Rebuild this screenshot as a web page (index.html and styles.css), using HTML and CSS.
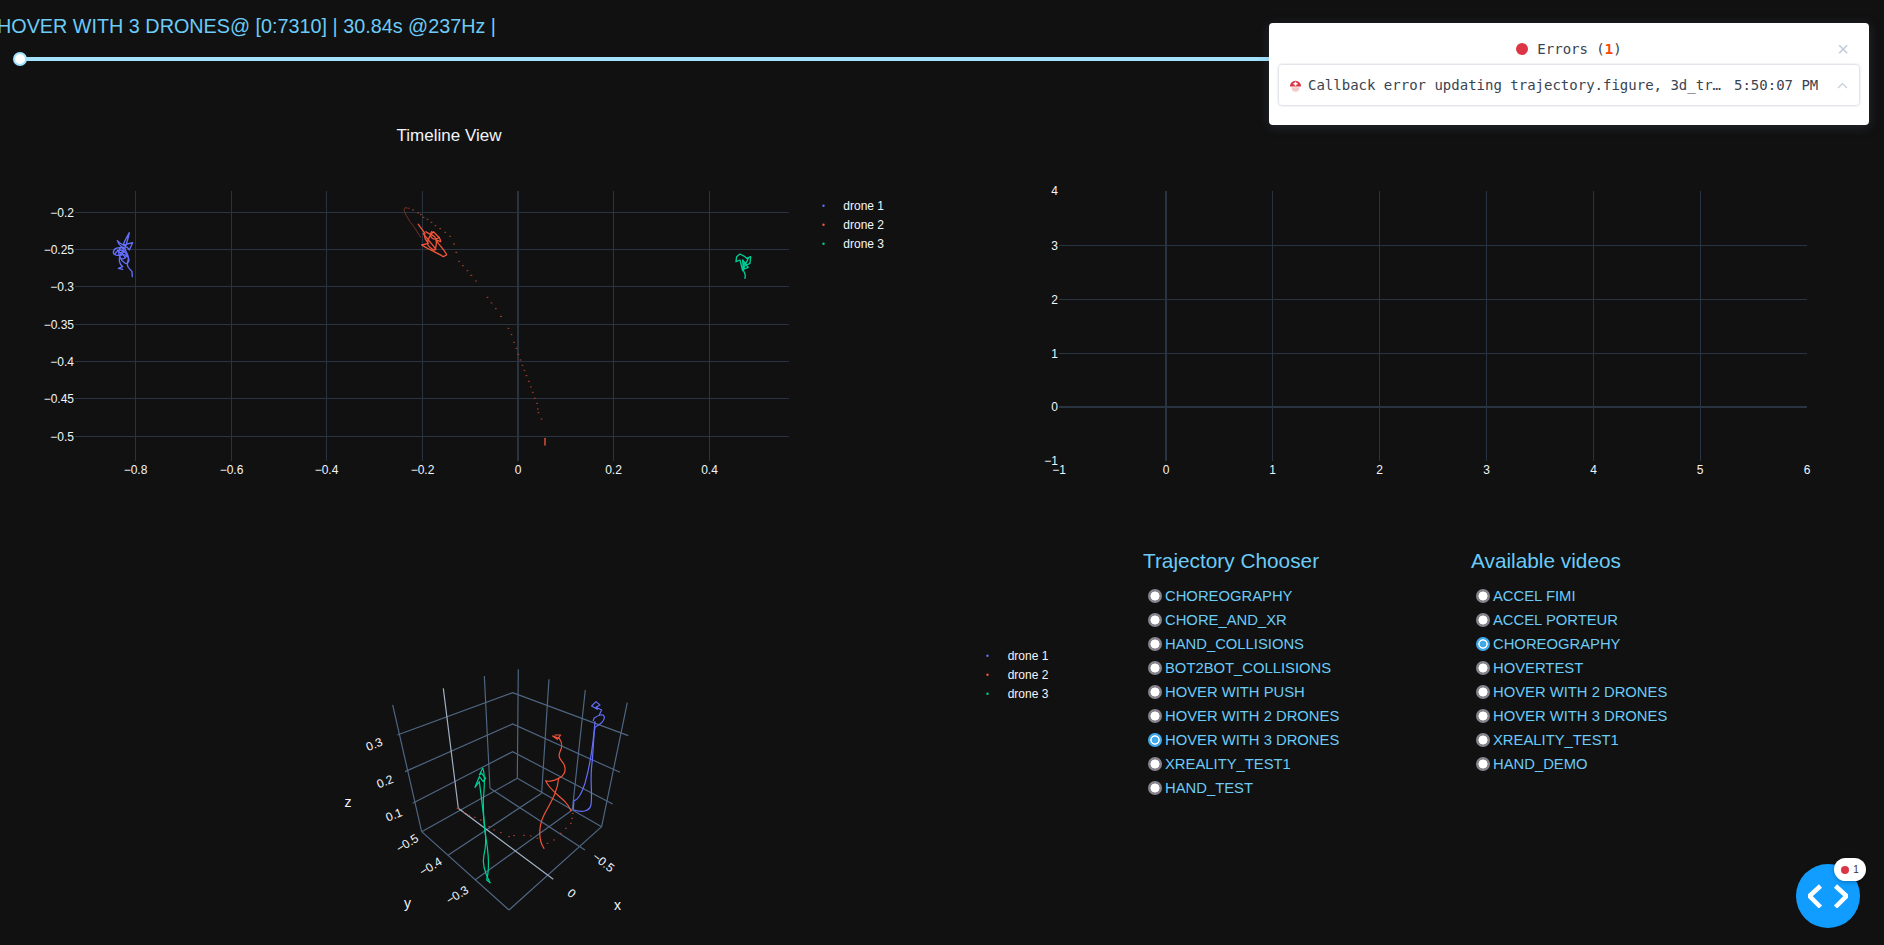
FILE: index.html
```html
<!DOCTYPE html>
<html lang="en">
<head>
  <meta charset="UTF-8">
  <title>Trajectory viewer</title>
  <link rel="stylesheet" href="styles.css">
</head>
<body>
  <h2 class="status">HOVER WITH 3 DRONES@ [0:7310] | 30.84s @237Hz |</h2>
  <div class="slider"><span class="slider-handle"></span></div>

  <div class="row-top">
    <!-- timeline -->
    <svg class="plot" width="942" height="450" viewBox="0 80 942 450">
      <text class="plot-title" x="449" y="141">Timeline View</text>
      <path class="grid" d="M75 212.5H789M75 249.5H789M75 286.5H789M75 324.5H789M75 361.5H789M75 398.5H789M75 436.5H789"/>
      <path class="grid" d="M135.5 191V461M231.5 191V461M326.5 191V461M422.5 191V461M613.5 191V461M709.5 191V461"/>
      <path class="zero" d="M518 191V461"/>
      <g class="tick tick-y">
        <text x="74" y="216.5">−0.2</text>
        <text x="74" y="253.5">−0.25</text>
        <text x="74" y="290.5">−0.3</text>
        <text x="74" y="328.5">−0.35</text>
        <text x="74" y="365.5">−0.4</text>
        <text x="74" y="402.5">−0.45</text>
        <text x="74" y="440.5">−0.5</text>
      </g>
      <g class="tick tick-x">
        <text x="135.5" y="473.5">−0.8</text>
        <text x="231.5" y="473.5">−0.6</text>
        <text x="326.5" y="473.5">−0.4</text>
        <text x="422.5" y="473.5">−0.2</text>
        <text x="518" y="473.5">0</text>
        <text x="613.5" y="473.5">0.2</text>
        <text x="709.5" y="473.5">0.4</text>
      </g>
      <g transform="translate(60 180) scale(.3333)">
        <path class="trace t-blue" d="M217 290L216 275L205 262C198 252 205 245 205 235C207 225 195 215 195 205C200 190 205 175 208 158C200 172 192 185 190 195L218 188L208 210C200 195 180 195 172 182C175 195 185 200 190 205C175 200 160 205 160 218C162 228 178 228 185 222C195 215 200 208 190 202C178 200 172 215 180 232C185 245 205 262 207 240C205 225 190 220 180 228C175 240 180 255 188 260L175 265L188 268"/>
        <path class="trace t-blue" d="M165 222C175 205 190 210 198 220C204 232 190 240 182 235C172 225 185 212 195 232M172 210C180 225 195 215 188 205"/>
      </g>
      <g transform="translate(400 180) scale(.3333)">
        <path class="trace t-red-dim" d="M62 172L45 145L30 125L18 105L12 90L15 83L28 85"/>
        <path class="trace t-red" d="M55 133L75 160C68 170 78 180 85 190L65 195C80 205 110 218 130 230L140 225C135 210 120 200 108 180L122 185C124 175 110 165 100 155L92 165C85 175 80 190 85 197C92 205 100 210 105 210C110 195 112 180 104 170C95 162 85 162 78 155"/>
        <path class="trace t-red" d="M70 160C80 175 95 190 108 208M95 155C85 170 100 185 118 172"/>
        <path class="dots" d="M37 90h5M52 99h5M60 104h5M68 112h5M80 118h5M92 127h5M104 137h5M118 146h5M133 157h5M148 169h5M159 192h6M166 217h6M175 244h5M186 257h5M200 272h5M211 286h6M225 303h5M260 352h5M272 369h5M285 386h5M300 409h6M323 445h5M332 464h5M340 487h5M347 505h5M353 523h5M359 540h5M365 556h5M371 571h5M377 587h5M384 604h5M390 621h5M396 637h5M402 655h5M409 670h5M411 687h5M413 698h5M422 717h5"/>
        <path class="trace t-red" d="M435 795V775"/>
        <path class="trace t-green" d="M1035 295L1036 285L1030 270L1028 240L1040 255L1050 250L1052 230L1040 235L1035 230L1020 222L1010 230L1008 245L1020 240L1028 272L1032 250L1045 262L1030 268L1045 235L1038 250"/>
      </g>
      <g class="legend">
        <circle class="f-blue" cx="823.5" cy="205.7" r="1.2"/>
        <circle class="f-red" cx="823.5" cy="224.7" r="1.2"/>
        <circle class="f-green" cx="823.5" cy="243.7" r="1.2"/>
        <text x="843.3" y="210">drone 1</text>
        <text x="843.3" y="229">drone 2</text>
        <text x="843.3" y="248">drone 3</text>
      </g>
    </svg>

    <!-- empty figure -->
    <svg class="plot" width="942" height="450" viewBox="942 80 942 450">
      <path class="grid" d="M1059 245.5H1807M1059 299.5H1807M1059 353.5H1807"/>
      <path class="grid" d="M1272.5 191V461M1379.5 191V461M1486.5 191V461M1593.5 191V461M1700.5 191V461"/>
      <path class="zero" d="M1059 407H1807M1166 191V461"/>
      <g class="tick tick-y">
        <text x="1058" y="194.5">4</text>
        <text x="1058" y="249.5">3</text>
        <text x="1058" y="303.5">2</text>
        <text x="1058" y="357.5">1</text>
        <text x="1058" y="411">0</text>
        <text x="1058" y="464.5">−1</text>
      </g>
      <g class="tick tick-x">
        <text x="1059" y="474">−1</text>
        <text x="1166" y="474">0</text>
        <text x="1272.5" y="474">1</text>
        <text x="1379.5" y="474">2</text>
        <text x="1486.5" y="474">3</text>
        <text x="1593.5" y="474">4</text>
        <text x="1700" y="474">5</text>
        <text x="1807" y="474">6</text>
      </g>
    </svg>
  </div>

  <div class="row-bottom">
    <!-- 3d scene -->
    <svg class="scene" width="1143" height="415" viewBox="0 530 1143 415">
      <g transform="translate(320 650) scale(.3333)">
        <path class="axis" d="M218 165L305 545M493 78L510 415M595 58L592 385M687 88L665 430M796 120L757 480M922 158L845 530"/>
        <path class="axis" d="M232 255L578 128L925 257M255 365L578 222L900 367M278 460L578 305L878 462"/>
        <path class="axis" d="M305 545L592 385M385 615L665 430M465 690L757 480M567 780L845 530"/>
        <path class="axis" d="M305 545L567 780M510 415L795 600M592 385L845 530"/>
        <path class="axis-main" d="M370 115L415 475L700 688"/>
        <path class="trace3d t-blue" d="M762 480C785 488 808 485 813 465C818 430 810 400 815 350C820 310 820 260 825 232C838 225 855 215 853 200C850 190 835 195 822 205L820 212"/>
        <path class="trace3d t-blue" d="M825 215C820 280 812 340 795 400C785 430 775 450 762 452L760 478"/>
        <path class="trace3d t-blue" d="M838 195L845 180L828 172L840 165L828 155L815 168L832 178"/>
        <path class="trace3d t-red" d="M672 595C655 570 655 530 672 495C690 460 712 430 716 385C700 395 680 395 677 392C685 415 715 435 735 455C745 465 750 475 753 482"/>
        <path class="trace3d t-red" d="M716 385C730 380 740 365 733 345C725 330 712 325 720 305C728 290 728 280 718 265L698 258L712 268L722 255L705 255"/>
        <path class="dots" d="M410 475h10M430 488h5M445 496h5M462 502h5M480 510h5M505 530h5M520 540h5M540 548h5M565 560h5M580 557h5M610 556h5M630 558h5M650 565h5M680 580h5M700 570h5M720 550h5M735 535h5M750 520h5M754 505h5M756 490h5"/>
        <path class="trace3d t-green" d="M510 698C495 670 486 640 492 615C498 590 498 560 495 535C490 490 484 440 478 395L465 412L478 380L490 395L497 385L485 370L478 375L488 355"/>
        <path class="trace3d t-green" d="M488 355C498 375 492 420 490 450C490 490 492 530 497 560C506 610 508 660 500 690L510 698"/>
      </g>
      <g class="tick tick-3d">
        <text transform="translate(374.3 744.3) rotate(-22)" y="4">0.3</text>
        <text transform="translate(385 781.7) rotate(-22)" y="4">0.2</text>
        <text transform="translate(394 815) rotate(-22)" y="4">0.1</text>
        <text transform="translate(407.3 843.3) rotate(-32)" y="4">−0.5</text>
        <text transform="translate(430.7 866.7) rotate(-32)" y="4">−0.4</text>
        <text transform="translate(457.3 895) rotate(-32)" y="4">−0.3</text>
        <text transform="translate(603.3 862.3) rotate(38)" y="4">−0.5</text>
        <text transform="translate(571.7 893.3) rotate(38)" y="4">0</text>
      </g>
      <g class="axis-title">
        <text x="348" y="807">z</text>
        <text x="407.5" y="908">y</text>
        <text x="617.5" y="910">x</text>
      </g>
      <g class="legend">
        <circle class="f-blue" cx="987.5" cy="655.7" r="1.2"/>
        <circle class="f-red" cx="987.5" cy="674.7" r="1.2"/>
        <circle class="f-green" cx="987.5" cy="693.7" r="1.2"/>
        <text x="1007.7" y="660">drone 1</text>
        <text x="1007.7" y="679">drone 2</text>
        <text x="1007.7" y="698">drone 3</text>
      </g>
    </svg>

    <div class="chooser">
      <h3 class="chooser-title">Trajectory Chooser</h3>
      <label class="choice"><input type="radio" name="traj">CHOREOGRAPHY</label>
      <label class="choice"><input type="radio" name="traj">CHORE_AND_XR</label>
      <label class="choice"><input type="radio" name="traj">HAND_COLLISIONS</label>
      <label class="choice"><input type="radio" name="traj">BOT2BOT_COLLISIONS</label>
      <label class="choice"><input type="radio" name="traj">HOVER WITH PUSH</label>
      <label class="choice"><input type="radio" name="traj">HOVER WITH 2 DRONES</label>
      <label class="choice"><input type="radio" name="traj" checked>HOVER WITH 3 DRONES</label>
      <label class="choice"><input type="radio" name="traj">XREALITY_TEST1</label>
      <label class="choice"><input type="radio" name="traj">HAND_TEST</label>
    </div>
    <div class="chooser">
      <h3 class="chooser-title">Available videos</h3>
      <label class="choice"><input type="radio" name="vid">ACCEL FIMI</label>
      <label class="choice"><input type="radio" name="vid">ACCEL PORTEUR</label>
      <label class="choice"><input type="radio" name="vid" checked>CHOREOGRAPHY</label>
      <label class="choice"><input type="radio" name="vid">HOVERTEST</label>
      <label class="choice"><input type="radio" name="vid">HOVER WITH 2 DRONES</label>
      <label class="choice"><input type="radio" name="vid">HOVER WITH 3 DRONES</label>
      <label class="choice"><input type="radio" name="vid">XREALITY_TEST1</label>
      <label class="choice"><input type="radio" name="vid">HAND_DEMO</label>
    </div>
  </div>

  <!-- dash debug menu -->
  <div class="toast">
    <div class="toast-head">
      <span class="red-dot"></span>
      <span>Errors (<b class="err-count">1</b>)</span>
      <span class="toast-close">×</span>
    </div>
    <div class="err-card">
      <svg class="err-icon" width="13" height="13" viewBox="0 0 14 14">
        <path fill="#dc3545" d="M1 8a6 6 0 0 1 12 0z"/>
        <path fill="#fff" d="M6.2 3h1.6v1.4h1.4v1.6H7.8v1.4H6.2V6H4.8V4.4h1.4z"/>
        <path fill="#f1c9c9" d="M2.5 9h9l-1 3.5a6 6 0 0 1-7 0z"/>
      </svg>
      <span class="err-msg">Callback error updating trajectory.figure, 3d_tr…</span>
      <span class="err-time">5:50:07 PM</span>
      <svg class="err-chevron" width="11" height="7" viewBox="0 0 11 7"><path d="M1 6L5.5 1.5L10 6"/></svg>
    </div>
  </div>

  <div class="fab">
    <svg width="40" height="24" viewBox="0 0 40 24"><path d="M12.5 2L1.5 12L12.5 23M27.5 2L38.5 12L27.5 23"/></svg>
    <span class="fab-badge"><span class="fab-dot"></span>1</span>
  </div>
</body>
</html>
```

FILE: styles.css
```css
html, body {
  margin: 0;
  padding: 0;
  height: 945px;
  overflow: hidden;
  background: #111111;
  font-family: "Liberation Sans", Arial, sans-serif;
  color: #7fdbff;
}
.status {
  margin: 0 0 0 -3px;
  height: 52px;
  line-height: 52px;
  font-size: 19.8px;
  font-weight: normal;
  white-space: nowrap;
  color: #6ccbf7;
}
.slider {
  position: relative;
  height: 4px;
  margin: 5px 30px 19px 20px;
  background: #a3e1fd;
}
.slider-handle {
  position: absolute;
  left: -7px;
  top: -5px;
  width: 10px;
  height: 10px;
  border: 2px solid #a3e1fd;
  border-radius: 50%;
  background: #fff;
}

.row-top {
  display: flex;
  height: 450px;
}
.row-bottom {
  display: flex;
  height: 415px;
}
.plot, .scene {
  display: block;
  flex: none;
}
.plot-title {
  fill: #f2f5fa;
  font-size: 17px;
  text-anchor: middle;
}
.grid {
  stroke: #283442;
  stroke-width: 1;
  fill: none;
}
.zero {
  stroke: #283442;
  stroke-width: 2;
  fill: none;
}
.tick text {
  fill: #f2f5fa;
  font-size: 12px;
}
.tick-y text { text-anchor: end; }
.tick-x text, .tick-3d text { text-anchor: middle; }
.legend text {
  fill: #f2f5fa;
  font-size: 12px;
}
.axis-title text {
  fill: #f2f5fa;
  font-size: 14px;
  text-anchor: middle;
}
.trace, .trace3d {
  fill: none;
  stroke-linejoin: round;
  stroke-linecap: round;
}
.trace { stroke-width: 4; }
.trace3d { stroke-width: 3.6; }
.t-blue { stroke: #636efa; }
.t-red { stroke: #ef553b; }
.t-red-dim { stroke: #7c3324; stroke-width: 3; stroke-dasharray: 5 3; }
.t-green { stroke: #00cc96; }
.dots {
  fill: none;
  stroke: #b8452f;
  stroke-width: 3;
}
.f-blue { fill: #636efa; }
.f-red { fill: #ef553b; }
.f-green { fill: #00cc96; }
.axis {
  fill: none;
  stroke: #506784;
  stroke-width: 3.5;
}
.axis-main {
  fill: none;
  stroke: #a2b1c6;
  stroke-width: 3.5;
}

.chooser {
  width: 328px;
  flex: none;
}
.chooser-title {
  margin: 18px 0 10px;
  height: 26px;
  line-height: 26px;
  font-size: 20.8px;
  font-weight: normal;
  color: #6ccbf7;
}
.choice {
  display: flex;
  align-items: center;
  height: 24px;
  padding-left: 5px;
  font-size: 14.8px;
  color: #6ccbf7;
}
.choice input {
  appearance: none;
  width: 14px;
  height: 14px;
  margin: 0 3px 0 0;
  border-radius: 50%;
  background: radial-gradient(circle, #fff 0 4.2px, #86838b 4.8px);
}
.choice input:checked {
  background: radial-gradient(circle, #3fa9ea 0 3.1px, #fff 3.7px 4.4px, #3fa9ea 5px);
}

.toast {
  position: absolute;
  left: 1269px;
  top: 23px;
  width: 600px;
  height: 102px;
  box-sizing: border-box;
  padding: 0 10px;
  border-radius: 4px;
  background: #fff;
  box-shadow: 0 2px 12px rgba(100, 110, 150, 0.25);
  font-family: "DejaVu Sans Mono", "Liberation Mono", monospace;
  font-size: 14px;
  color: #3a4350;
}
.toast-head {
  position: relative;
  display: flex;
  align-items: center;
  justify-content: center;
  gap: 9px;
  height: 42px;
  padding-top: 9px;
  box-sizing: border-box;
}
.red-dot {
  width: 12px;
  height: 12px;
  border-radius: 50%;
  background: #dc3545;
}
.err-count {
  color: #ff4500;
}
.toast-close {
  position: absolute;
  right: 10px;
  top: 16px;
  font-family: "Liberation Sans", sans-serif;
  font-size: 20px;
  line-height: 20px;
  color: #c4ccd6;
}
.err-card {
  display: flex;
  align-items: center;
  height: 40px;
  padding: 0 10px;
  border-radius: 3px;
  background: #fff;
  box-shadow: 0 0 3px rgba(60, 70, 100, 0.4);
}
.err-icon {
  flex: none;
  margin-right: 6px;
}
.err-msg {
  width: 426px;
  flex: none;
  white-space: nowrap;
}
.err-time {
  flex: none;
  margin-right: 19px;
}
.err-chevron {
  flex: none;
}
.err-chevron path {
  fill: none;
  stroke: #c4ccd6;
  stroke-width: 1.2;
}

.fab {
  position: absolute;
  left: 1796px;
  top: 864px;
  width: 64px;
  height: 64px;
  display: flex;
  align-items: center;
  justify-content: center;
  border-radius: 50%;
  background: #119dff;
}
.fab svg path {
  fill: none;
  stroke: #fff;
  stroke-width: 4.5;
}
.fab-badge {
  position: absolute;
  left: 38px;
  top: -6px;
  width: 32px;
  height: 23px;
  display: flex;
  align-items: center;
  justify-content: center;
  gap: 4px;
  border-radius: 12px;
  background: #fff;
  box-shadow: 0 1px 4px rgba(0, 0, 0, 0.3);
  font-size: 10px;
  color: #333;
}
.fab-dot {
  width: 8px;
  height: 8px;
  border-radius: 50%;
  background: #dc3545;
}
```
